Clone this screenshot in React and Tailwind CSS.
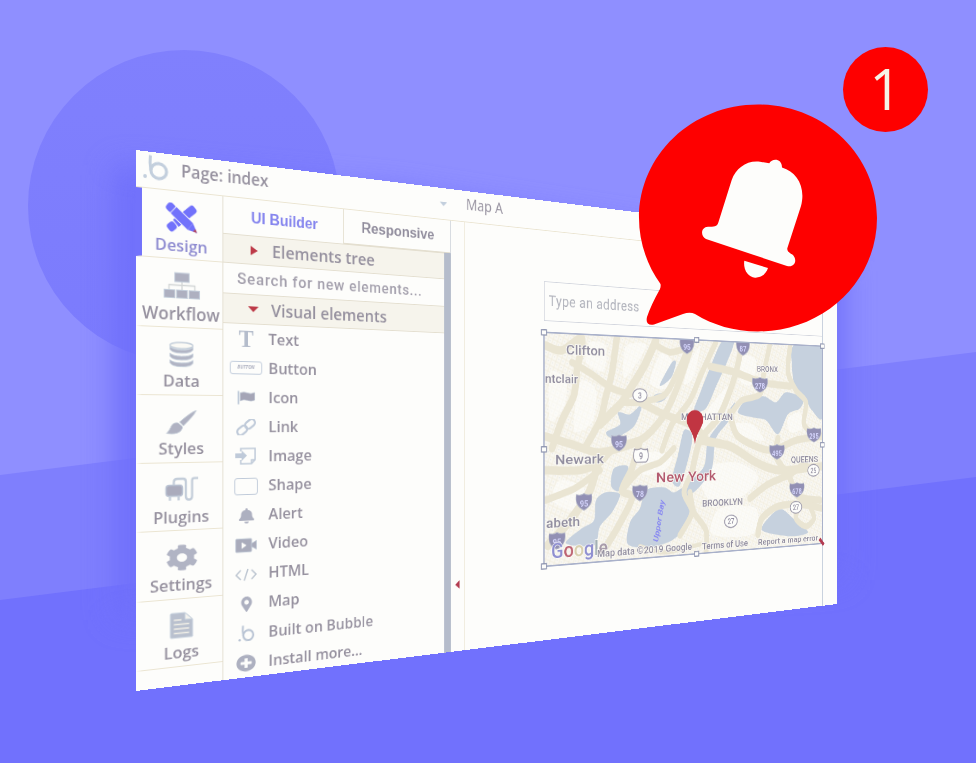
import React from "react";
import {
  FaCog, FaBell, FaMapMarkerAlt, FaPlusCircle,
} from "react-icons/fa";

/* ---------- perspective helpers: window plane <-> canvas ---------- */
const G = 0.000459;
const MAP_X = 502;
const MAP_Y = 161.6;
function plane(x, y) {
  const d = x - 136;
  const w = 1 / (1 - G * d);
  const u = d * w;
  return [u - MAP_X, y * w - 150 - 0.193 * u - MAP_Y];
}
function trace(flat, closed) {
  const pts = [];
  for (let i = 0; i < flat.length; i += 2) pts.push(plane(flat[i], flat[i + 1]));
  const n = pts.length;
  const at = (i) => (closed ? pts[(i + n) % n] : pts[Math.max(0, Math.min(n - 1, i))]);
  let d = `M${pts[0][0].toFixed(1)} ${pts[0][1].toFixed(1)}`;
  const last = closed ? n : n - 1;
  for (let i = 0; i < last; i++) {
    const a = at(i - 1), b = at(i), c = at(i + 1), e = at(i + 2);
    const k = 7;
    d += `C${(b[0] + (c[0] - a[0]) / k).toFixed(1)} ${(b[1] + (c[1] - a[1]) / k).toFixed(1)} ${(c[0] - (e[0] - b[0]) / k).toFixed(1)} ${(c[1] - (e[1] - b[1]) / k).toFixed(1)} ${c[0].toFixed(1)} ${c[1].toFixed(1)}`;
  }
  return closed ? d + "Z" : d;
}

/* ---------- icons ---------- */
const BubbleB = ({ className }) => (
  <svg viewBox="0 0 26 26" className={className} fill="none" stroke="currentColor">
    <path d="M8 0.500q-1 8 0.500 15" strokeWidth="3" />
    <ellipse cx="16.500" cy="15.500" rx="8" ry="7.600" strokeWidth="3.200" />
    <circle cx="2.600" cy="22" r="1.900" fill="currentColor" stroke="none" />
  </svg>
);
const DesignIcon = () => (
  <svg viewBox="0 0 34 30" className="h-[30px] w-[34px]">
    <g fill="#7272fb">
      <g transform="rotate(-41 17 15)">
        <rect x="-1.500" y="10.500" width="9" height="9" rx="3" />
        <rect x="8.500" y="10.500" width="17" height="9" />
        <rect x="24" y="10.500" width="11" height="9" rx="3" />
      </g>
      <g transform="rotate(41 17 15)">
        <rect x="-3" y="10.500" width="9" height="9" rx="3.500" />
        <rect x="5" y="10" width="24" height="10" stroke="#fdfdfb" strokeWidth="0.800" />
        <path d="M28.500 10.500 38 15l-9.500 4.500z" />
        <path d="M34 13.100 38 15 34 16.900z" fill="#b5485e" />
      </g>
    </g>
  </svg>
);
const WorkflowIcon = () => (
  <svg viewBox="0 0 38 28" className="h-[28px] w-[40px]">
    <path d="M19 9v9M5.500 18v-4.500h27V18" fill="none" stroke="#d3d6d6" strokeWidth="1.300" />
    <g fill="#aeb0c0" stroke="#c3cedb" strokeWidth="1">
      <rect x="11.500" y="1" width="15" height="9" />
      <rect x="0.600" y="18.500" width="11" height="8" />
      <rect x="13.500" y="18.500" width="11" height="8" />
      <rect x="26.400" y="18.500" width="11" height="8" />
    </g>
  </svg>
);
const DataIcon = () => (
  <svg viewBox="0 0 27 26" className="h-[26px] w-[27px]">
    <ellipse cx="13.500" cy="4" rx="12" ry="3.200" fill="#fbfaf5" stroke="#c6d0db" strokeWidth="1.400" />
    <g fill="#b1b4c4" stroke="#c3cedb" strokeWidth="0.800">
      <path d="M1.500 5.500v2.500q2 3.800 12 3.800t12-3.800V5.500q-3 3-12 3t-12-3z" />
      <path d="M1.500 12v3q2 3.800 12 3.800t12-3.800v-3q-3 3-12 3t-12-3z" />
      <path d="M1.500 18.800v3q2 3.800 12 3.800t12-3.800v-3q-3 3-12 3t-12-3z" />
    </g>
  </svg>
);
const BrushIcon = () => (
  <svg viewBox="0 0 34 26" className="h-[26px] w-[33px]" fill="#b0b2c2" stroke="#c7d0da" strokeWidth="0.700">
    <path d="M33 1Q28 2 15 13l4 4Q30 7 33 1z" />
    <path d="M13.500 14q-6-1-8 4.500Q4 22 1 25q11 1.500 15-2.500 3-3 1.500-5z" />
  </svg>
);
const PluginIcon = () => (
  <svg viewBox="0 0 36 26" className="h-[26px] w-[36px]" fill="none" stroke="#c3cdd9" strokeWidth="2.300">
    <rect x="1.500" y="8.500" width="17" height="11" rx="3" fill="#aaabbc" stroke="#b9c2d2" strokeWidth="1.500" />
    <path d="M5.500 19v5M14.500 19v5M9.500 8V5.500Q9.500 2 13 2h6q3 0 3 3v15q0 3.600 3.300 3.600T28.600 20V4q0-2.300 2.400-2.300h4" />
  </svg>
);
const LogsIcon = () => (
  <svg viewBox="0 0 25 27" className="h-[27px] w-[25px]">
    <path d="M2 1h14l8 7v18H2q-1 0-1-1V2q0-1 1-1z" fill="#b9c0ce" stroke="#c3cedb" />
    <path d="M16 1v7h8z" fill="#f4f3ee" stroke="#c3cedb" />
    <path d="M4.500 8h8M4.500 12.500h16M4.500 17h16M4.500 21.500h16" stroke="#efede6" strokeWidth="1.600" />
  </svg>
);
const ButtonIcon = () => (
  <span className="flex h-[14px] w-[36px] items-center justify-center rounded-[3px] border-[1.5px] border-[#c1ccdb] text-[5px] font-bold italic">BUTTON</span>
);
const TextIcon = () => (
  <span className="font-['Liberation_Serif',serif] text-[25px] font-bold leading-none text-[#b4bccb]">T</span>
);
const FlagIcon = () => (
  <svg viewBox="0 0 20 15" className="h-[15px] w-[20px]">
    <path d="M1.500 0.500v14" stroke="#bfcad9" strokeWidth="1.800" />
    <path d="M3.500 2.500q4-1.500 8 0t8-0.500v8q-4 1.800-8 0.300t-8 0.500z" fill="#a5a5b6" stroke="#b9c2d0" strokeWidth="0.700" />
  </svg>
);
const LinkIcon = () => (
  <svg viewBox="0 0 22 17" className="h-[17px] w-[22px]" fill="none" stroke="#bfcad9" strokeWidth="2.200">
    <g transform="rotate(-38 11 8.500)">
      <rect x="-0.500" y="4.800" width="12" height="7.400" rx="3.700" />
      <rect x="10.500" y="4.800" width="12" height="7.400" rx="3.700" />
    </g>
  </svg>
);
const ImageIcon = () => (
  <svg viewBox="0 0 24 20" className="h-5 w-6" fill="none" stroke="#bfcad9" strokeWidth="1.600">
    <path d="M6 5V2h16v12l-4 4H6v-4M22 14h-4v4" />
    <path d="M0 7h7V4l6 5.500-6 5.500v-3H0z" fill="#bfcad9" stroke="none" />
  </svg>
);
const ShapeIcon = () => <span className="h-[18px] w-[26px] rounded-[3px] border-[1.5px] border-[#bfcad9]" />;
const VideoIcon = () => (
  <svg viewBox="0 0 24 15" className="h-[16px] w-[24px]" fill="#a9abbb" stroke="#bcc6d4" strokeWidth="0.800">
    <rect x="0.600" y="0.600" width="17.500" height="13.800" rx="1" />
    <path d="M18 6 23.400 3v9L18 9z" />
    <path d="M7 4 12.500 7.500 7 11z" fill="#fdfdfb" stroke="none" />
  </svg>
);
const CodeIcon = () => (
  <svg viewBox="0 0 26 14" className="h-[14px] w-[26px]" fill="none" stroke="#bcc5d0" strokeWidth="1.500">
    <path d="M7 2 2 7l5 5M19 2l5 5-5 5M15 1l-4 12" />
  </svg>
);

/* ---------- window content ---------- */
const NAV = [
  ["Design", <DesignIcon />],
  ["Workflow", <WorkflowIcon />],
  ["Data", <DataIcon />],
  ["Styles", <BrushIcon />],
  ["Plugins", <PluginIcon />],
  ["Settings", <FaCog className="h-[27px] w-[34px]" preserveAspectRatio="none" />],
  ["Logs", <LogsIcon />],
];
const ITEMS = [
  ["Text", <TextIcon />],
  ["Button", <ButtonIcon />],
  ["Icon", <FlagIcon />],
  ["Link", <LinkIcon />],
  ["Image", <ImageIcon />],
  ["Shape", <ShapeIcon />],
  ["Alert", <FaBell className="h-[16px] w-[17px]" preserveAspectRatio="none" />],
  ["Video", <VideoIcon />],
  ["HTML", <CodeIcon />],
  ["Map", <FaMapMarkerAlt className="h-[16px] w-[13px]" />],
  ["Built on Bubble", <BubbleB className="h-[18px] w-[20px] text-[#b9c4d4]" />],
  ["Install more...", <FaPlusCircle className="h-[18px] w-[22px]" preserveAspectRatio="none" />],
];

const WATER = [
  [722, 341, 734, 341, 727, 362, 717, 384, 706, 408, 694, 411, 700, 393, 709, 370],
  [684, 430, 692, 434, 690, 452, 680, 485, 672, 480, 678, 455],
  [735, 402, 729, 420, 716, 438, 712, 468, 700, 486, 690, 494, 686, 486, 704, 466, 708, 440, 722, 420],
  [794, 345, 823, 346, 823, 416, 812, 410, 805, 398, 795, 386, 792, 366],
  [748, 398, 764, 396, 776, 402, 786, 392, 803, 398, 800, 408, 788, 414, 778, 434, 766, 420, 752, 417, 738, 412],
  [614, 468, 628, 466, 625, 482, 618, 491, 611, 485],
  [596, 500, 606, 492, 620, 494, 612, 512, 600, 526, 594, 545, 566, 543, 582, 528, 594, 520],
  [646, 490, 664, 487, 674, 492, 688, 486, 690, 508, 684, 528, 672, 540, 650, 547, 628, 544, 630, 522, 640, 508],
  [762, 530, 772, 514, 782, 509, 794, 519, 808, 532, 790, 536],
  [672, 362, 676, 362, 672, 376, 664, 384, 660, 384],
  [654, 395, 668, 392, 664, 400, 656, 402],
  [618, 412, 630, 414, 642, 404, 634, 426, 614, 438, 606, 432, 620, 424],
];
const ROADS = [
  [7, 545, 345, 562, 350, 582, 338, 577, 370, 574, 395, 562, 420, 552, 448],
  [7, 617, 336, 612, 372, 606, 396, 600, 420, 586, 446],
  [6, 572, 362, 592, 374, 612, 388, 630, 394],
  [8, 656, 340, 644, 366, 628, 392, 622, 402, 600, 424],
  [6, 654, 344, 670, 352, 686, 350, 676, 375, 664, 395, 640, 402, 622, 402],
  [7, 545, 436, 572, 444, 600, 452, 640, 440, 662, 418, 676, 390, 690, 350],
  [7, 640, 402, 664, 414, 690, 424, 705, 436],
  [7, 545, 470, 580, 470, 600, 462, 612, 450, 640, 440],
  [8, 600, 454, 590, 490, 570, 520, 548, 545],
  [6, 545, 500, 575, 488, 600, 470],
  [7, 640, 440, 632, 468, 622, 490, 632, 498, 616, 530, 602, 552],
  [6, 622, 490, 640, 470, 660, 462, 674, 448],
  [6, 716, 342, 702, 372, 690, 400, 672, 424, 662, 450],
  [7, 742, 345, 736, 372, 728, 396, 718, 418, 700, 440, 692, 472],
  [7, 710, 366, 735, 372, 762, 382, 790, 386],
  [6, 770, 344, 764, 372, 760, 394, 742, 400, 732, 412],
  [6, 790, 346, 788, 372, 796, 390, 806, 402, 804, 424, 816, 436],
  [7, 730, 412, 738, 436, 770, 450, 796, 440, 822, 436],
  [8, 700, 440, 730, 446, 756, 462, 780, 470, 822, 466],
  [7, 778, 438, 776, 456, 790, 478, 798, 496, 820, 500],
  [7, 750, 498, 768, 484, 790, 474, 806, 462],
  [6, 690, 492, 694, 512, 706, 530, 706, 552],
  [7, 758, 534, 762, 518, 778, 506, 800, 504, 822, 508],
  [6, 800, 504, 796, 518, 806, 526, 814, 518, 810, 506],
  [6, 692, 472, 684, 492, 692, 512, 680, 535],
  [4, 640, 546, 665, 552, 700, 544],
];
const PATCHES = [
  [590, 342, 586, 362, 603, 371, 606, 346], [626, 346, 624, 378, 640, 358, 646, 344],
  [662, 352, 650, 382, 666, 388, 674, 366], [550, 372, 566, 380, 564, 406, 550, 420],
  [580, 382, 596, 390, 592, 422, 574, 430], [700, 346, 690, 362, 684, 384, 694, 376],
  [742, 356, 740, 380, 752, 384, 756, 360], [705, 414, 700, 438, 724, 410, 728, 386],
  [700, 470, 710, 500, 742, 496, 758, 476, 735, 462], [720, 508, 712, 534, 752, 534, 756, 508],
  [560, 480, 552, 500, 575, 510, 584, 488], [732, 424, 744, 436, 764, 440, 752, 424],
  [648, 452, 642, 474, 664, 470, 672, 456], [788, 418, 790, 432, 802, 428, 800, 412],
];
const SHIELDS = [
  [687, 346, "95"], [743, 348, "87"], [760, 385, "278"], [619, 443, "95"], [777, 452, "495"],
  [814, 435, "295"], [640, 493, "78"], [584, 502, "95"], [797, 490, "678"], [557, 541, "95"],
];
const ROUTES = [[640, 395, "3"], [731, 521, "27"], [796, 507, "27"], [813.5, 470, "25"]];

/* label: left, right, baseline-left y, baseline-right y, size */
const LABELS = [
  ["Clifton", 566, 605, 354, 356, 16.5],
  ["ntclair", 545, 578, 382, 383, 14.5],
  ["Newark", 555, 604, 463, 463.5, 17],
  ["abeth", 546, 580, 527, 527, 16.5],
  ["New York", 656, 716, 482, 480, 18, "#b35a6e"],
  ["MANHATTAN", 681, 733, 420, 420, 12.5],
  ["BRONX", 757, 778, 371, 372, 10.5],
  ["QUEENS", 791, 818, 462, 462, 12],
  ["BROOKLYN", 702, 743, 506, 504, 13],
  ["Map data ©2019 Google", 597, 692, 557, 550, 12.5],
  ["Terms of Use", 702, 748, 549, 546, 12.5],
  ["Report a map error", 758, 818, 544, 541, 11.5],
];
const HANDLES = [[0, 0], [253, 0], [500, 0], [0, 144], [500, 144], [0, 288], [253, 288]];

function Label({ l }) {
  const [t, x1, x2, y1, y2, s, c] = l;
  const a = plane(x1, y1), b = plane(x2, y2);
  return (
    <text x={a[0]} y={(a[1] + b[1]) / 2} fontSize={s} textLength={b[0] - a[0]} lengthAdjust="spacingAndGlyphs"
      fill={c || "#918d9f"} stroke="#fbfaf5" strokeWidth="1.8" paintOrder="stroke" fontWeight="500">{t}</text>
  );
}

function CityMap() {
  const pin = plane(695, 444);
  const g1 = plane(551, 558), g2 = plane(608, 557);
  const us = plane(641, 455);
  const bay1 = plane(658, 542);
  return (
    <svg viewBox="0 0 500 288" className="block h-[288px] w-[500px] overflow-visible font-[Roboto,'Liberation_Sans',sans-serif]">
      <defs>
        <clipPath id="frame"><rect width="500" height="288" /></clipPath>
        <pattern id="streets" width="7" height="8" patternUnits="userSpaceOnUse" patternTransform="rotate(22)">
          <rect width="7" height="8" fill="#fbfaf6" />
          <path d="M0 2h7M2 0v8" stroke="#f1ecdc" strokeWidth="1" />
          <rect x="4.500" y="5" width="1.200" height="1.200" fill="#d3dbe3" />
        </pattern>
      </defs>
      <g clipPath="url(#frame)">
        <rect width="500" height="288" fill="#f3efe2" />
        <rect width="500" height="288" fill="url(#streets)" opacity="0.75" />
        {PATCHES.map((p, i) => <path key={i} d={trace(p, true)} fill="#fdfdfb" opacity="0.6" />)}
        {WATER.map((p, i) => <path key={i} d={trace(p, true)} fill="#c6d1de" />)}
        {ROADS.map((p, i) => (
          <path key={i} d={trace(p.slice(1), false)} fill="none" stroke="#eae5d3" strokeWidth={p[0] * 1.5} strokeLinecap="round" />
        ))}
        {SHIELDS.map(([x, y, t], i) => {
          const [px, py] = plane(x, y);
          const w = t.length > 2 ? 1.3 : 1.1;
          return (
            <g key={i} transform={`translate(${px} ${py})`}>
              <path transform={`scale(${w} 1)`} d="M-11-10q5.500 2 11-1q5.500 3 11 1q3 14-11 20q-14-6-11-20z" fill="#9290b4" stroke="#b9bccb" />
              <text textAnchor="middle" y="5" fontSize="11.500" fontWeight="700" fill="#d4d4fb">{t}</text>
            </g>
          );
        })}
        {ROUTES.map(([x, y, t], i) => {
          const [px, py] = plane(x, y);
          return (
            <g key={i} transform={`translate(${px} ${py})`}>
              <ellipse rx="12" ry="8.500" fill="#fdfdfb" stroke="#9c99a9" strokeWidth="1.500" />
              <text textAnchor="middle" y="4" fontSize="11" fontWeight="500" fill="#918d9f">{t}</text>
            </g>
          );
        })}
        <g transform={`translate(${us[0]} ${us[1]})`}>
          <path d="M-11-8q5 2 11-1q6 3 11 1q4 14-3 17h-16q-7-3-3-17z" fill="#fdfdfb" stroke="#9c99a9" strokeWidth="1.500" />
          <text textAnchor="middle" y="5" fontSize="12" fontWeight="500" fill="#918d9f">9</text>
        </g>
        <text x={g1[0]} y={g1[1]} fontSize="25" fontWeight="500" textLength={g2[0] - g1[0]} lengthAdjust="spacingAndGlyphs" stroke="#fdfdfb" strokeWidth="1.500" paintOrder="stroke">
          <tspan fill="#8f8fd0">G</tspan><tspan fill="#bd6472">o</tspan><tspan fill="#d8cfae">o</tspan>
          <tspan fill="#8f8fd0">g</tspan><tspan fill="#a3b0b4">l</tspan><tspan fill="#a79aa8">e</tspan>
        </text>
        {LABELS.map((l, i) => <Label key={i} l={l} />)}
        <text transform={`translate(${bay1[0]} ${bay1[1]}) rotate(-78)`} fontSize="12.500" fontStyle="italic" fill="#8585f2">Upper Bay</text>
        <path transform={`translate(${pin[0]} ${pin[1]})`} d="M0 0C-2-16-16-25-15-33A15 13 0 0 1 15-33C16-25 2-16 0 0z" fill="#c13542" />
      </g>
      <rect width="500" height="288" fill="none" stroke="#a9b1ca" strokeWidth="2" />
      {HANDLES.map(([x, y], i) => (
        <rect key={i} x={x - 3.8} y={y - 3.2} width="7.600" height="6.400" fill="#fdfdfb" stroke="#8f95b0" strokeWidth="1.500" />
      ))}
      <path d="M494 281l9 9" stroke="#b33b50" strokeWidth="5" />
    </svg>
  );
}

function Window() {
  return (
    <div className="absolute left-0 top-0 flex h-[541px] w-[1033px] origin-top-left flex-col overflow-hidden bg-[#fdfdfb] font-['Open_Sans',sans-serif] font-semibold text-[#96919f] [transform:matrix3d(1.0624,0.193,0,0.000459,0,1,0,0,0,0,1,0,136,150,0,1)]">
      <header className="flex h-[37px] shrink-0 items-center border-b border-[#ebe5d2] pb-1">
        <BubbleB className="ml-[5px] h-[26px] w-[29px] text-[#c3cfdd]" />
        <span className="ml-[12px] w-[307px] text-[17.2px] leading-none">Page: index</span>
        <span className="mt-1 border-x-[5px] border-t-[5px] border-x-transparent border-t-[#c3cfdd]" />
        <span className="ml-[26px] text-[17.6px] font-medium leading-none">Map A</span>
      </header>
      <div className="flex min-h-0 flex-1">
        <nav className="flex w-[91px] shrink-0 flex-col border-r border-[#e3ded0]">
          {NAV.map(([name, icon], i) => (
            <div key={name} className={"flex h-[69.3px] shrink-0 flex-col items-center border-b border-b-[#ebe5d2] border-l-[6px] pr-[3px] pt-[11px] " + (i === 0 ? "border-l-[#7272fb] text-[#8d8ad0]" : "border-l-transparent")}>
              <div className="flex h-[32px] items-center text-[#b1b4c4]">{icon}</div>
              <span className={"mt-[2.500px] leading-[18px] " + (i === 1 ? "text-[17.500px]" : "text-[16.800px]")}>{name}</span>
            </div>
          ))}
        </nav>
        <section className="flex w-[277px] shrink-0 flex-col">
          <div className="flex h-[38px] shrink-0 border-r border-[#d5d9df] font-['Liberation_Sans',sans-serif] font-bold">
            <div className="flex w-[138px] items-center justify-center text-[16.3px] text-[#8585ee]">UI Builder</div>
            <div className="flex flex-1 items-center justify-center border-b border-l border-[#e4dfd0] text-[16.800px] text-[#918d9d]">Responsive</div>
          </div>
          <div className="flex min-h-0 flex-1">
            <div className="flex w-[268px] flex-col">
              <div className="flex h-[31px] shrink-0 items-center border-y border-[#e4dfd0] bg-[#f6f4ec] pl-[30px] text-[18.4px]">
                <span className="border-y-[5px] border-l-[8px] border-y-transparent border-l-[#bd3a48]" />
                <span className="ml-[16px] leading-none">Elements tree</span>
              </div>
              <div className="flex h-[31px] shrink-0 items-center pl-[15px] font-[Roboto,sans-serif] text-[17px] font-medium tracking-[0.8px] text-[#a39fac]">Search for new elements...</div>
              <div className="flex h-[31.5px] shrink-0 items-center border-y border-[#e4dfd0] bg-[#f6f4ec] pl-[27px] text-[18.3px]">
                <span className="border-x-[6px] border-t-[6px] border-x-transparent border-t-[#bd3a48]" />
                <span className="ml-[14px] leading-none">Visual elements</span>
              </div>
              {ITEMS.map(([name, icon]) => (
                <div key={name} className="flex h-[31.1px] shrink-0 items-center text-[16.9px]">
                  <span className="flex w-[50px] justify-center text-[#adb0c0]">{icon}</span>
                  <span className="leading-none">{name}</span>
                </div>
              ))}
            </div>
            <div className="flex-1 bg-[#b5bccb]" />
          </div>
        </section>
        <div className="flex w-[19px] shrink-0 items-end justify-center border-r border-[#ebe5d2] pb-[73px]">
          <span className="border-y-[5px] border-r-[6px] border-y-transparent border-r-[#b33b50]" />
        </div>
        <main className="w-[616px] shrink-0 border-r-2 border-[#c9d2de] pl-[115px] pt-[62px]">
          <div className="mb-[14px] flex h-[49px] w-[500px] items-center border border-[#d3d6de] pl-[6px] font-[Roboto,sans-serif] text-[19px] font-normal tracking-[0.5px] text-[#b0b2bb]">Type an address</div>
          <CityMap />
        </main>
      </div>
    </div>
  );
}

export default function App() {
  return (
    <div className="relative h-[763px] w-[976px] overflow-hidden bg-[#8f8fff]">
      <svg viewBox="0 0 976 763" className="absolute inset-0 h-[763px] w-[976px]">
        <defs>
          <linearGradient id="disc" x1="0" y1="0" x2="0" y2="1">
            <stop offset="0" stopColor="#8080fd" /><stop offset="1" stopColor="#7b7bfd" />
          </linearGradient>
          <filter id="soft" x="-20%" y="-20%" width="140%" height="140%"><feGaussianBlur stdDeviation="15" /></filter>
        </defs>
        <path d="M0 475 976 352V763H0z" fill="#7f7ffd" />
        <circle cx="184" cy="206" r="156" fill="url(#disc)" />
        <path d="M0 600 976 477V763H0z" fill="#7171fd" />
        <path d="M113 165 400 192 845 262V580L113 620z" fill="#6f6ffb" opacity="0.95" filter="url(#soft)" />
      </svg>
      <Window />
      <svg viewBox="0 0 976 763" className="absolute inset-0 h-[763px] w-[976px]">
        <path d="M660.500 284C646 264 639 240 639 218C639 155 692 104.500 758 104.500S877 155 877 218S824 331.500 758 331.500C734 331.500 713 325 695 314Q690 311.500 683 314L654 324.500Q645 326 647 317Q651 305 660 289Q661 286 660.500 284z" fill="#fe0000" />
        <path d="M731.700 180C736 168 747 160 760 161.700L769.300 163.300C772 158 782 158 782 167.500C797 172 806 187 801 206L787.300 248.300C787 252 790 253 793 255C798 261 794 268 787 266L706 239C700 236 701 227 708 226.700C714 226.500 717 227.500 718.500 222z" fill="#fdfdfb" />
        <path d="M744.300 260.700 768 268C766 274 761 278 755 277.700C748 277 743 270 744.300 260.700z" fill="#fdfdfb" />
      </svg>
      <div className="absolute left-[843px] top-[47px] flex h-[85px] w-[85px] items-center justify-center rounded-full bg-[#fe0000] pb-1 font-['Open_Sans',sans-serif] text-[56px] leading-none text-[#f6f3e6]">1</div>
    </div>
  );
}
